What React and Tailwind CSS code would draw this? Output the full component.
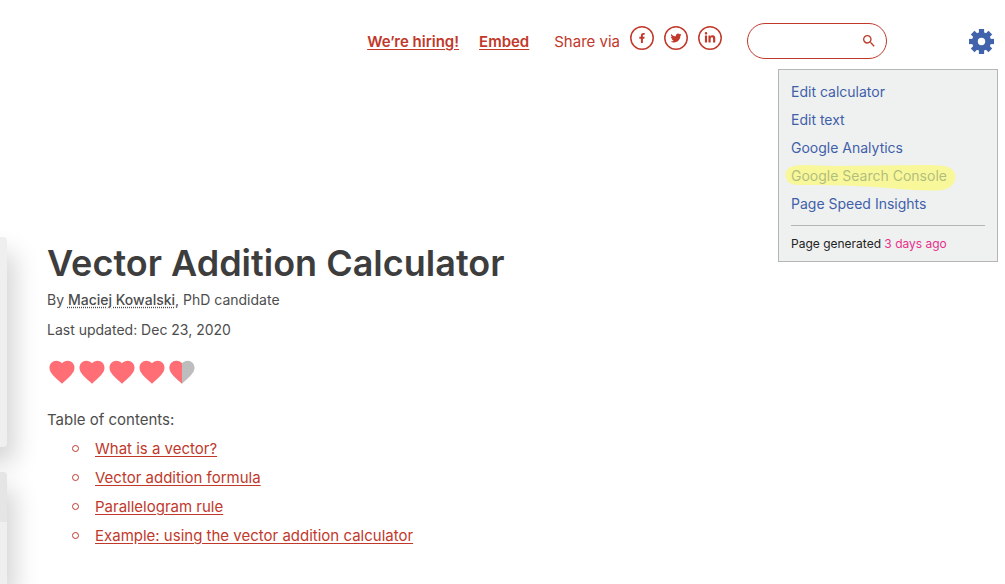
import React from "react";
import { FaFacebookF, FaTwitter, FaLinkedinIn } from "react-icons/fa";
import { MdSearch } from "react-icons/md";

const HEART =
  "M12 21.35l-1.45-1.32C5.4 15.36 2 12.28 2 8.5 2 5.42 4.42 3 7.5 3c1.74 0 3.41.81 4.5 2.09C13.09 3.81 14.76 3 16.5 3 19.58 3 22 5.42 22 8.5c0 3.78-3.4 6.86-8.55 11.54L12 21.35z";

const shareLinks = [
  { label: "Facebook", Icon: FaFacebookF, size: 10 },
  { label: "Twitter", Icon: FaTwitter, size: 11 },
  { label: "LinkedIn", Icon: FaLinkedinIn, size: 12 },
];

const adminLinks = [
  { label: "Edit calculator" },
  { label: "Edit text" },
  { label: "Google Analytics" },
  { label: "Google Search Console", marked: true },
  { label: "Page Speed Insights" },
];

const sections = [
  "What is a vector?",
  "Vector addition formula",
  "Parallelogram rule",
  "Example: using the vector addition calculator",
];

function Gear() {
  return (
    <svg viewBox="0 0 25 25" className="block size-[25px]" aria-hidden="true">
      <g fill="#4063ab">
        {[0, 45, 90, 135].map((angle) => (
          <rect key={angle} x="9.9" y="0" width="5.2" height="25" transform={`rotate(${angle} 12.5 12.5)`} />
        ))}
        <circle cx="12.5" cy="12.5" r="9.6" />
      </g>
      <circle cx="12.5" cy="12.5" r="3.7" fill="#fff" />
    </svg>
  );
}

function Heart({ half }) {
  return (
    <svg viewBox="0 0 24 24" className="block size-[30px]" aria-hidden="true">
      <clipPath id="heart-left">
        <rect width="12" height="24" />
      </clipPath>
      {half && <path d={HEART} fill="#bdbdbd" />}
      <path d={HEART} fill="#ff6d75" clipPath={half ? "url(#heart-left)" : undefined} />
    </svg>
  );
}

function ShareIcon({ Icon, size }) {
  return (
    <svg viewBox="0 0 24 24" className="block size-6" aria-hidden="true">
      <circle cx="12" cy="12" r="11.2" fill="none" stroke="currentColor" strokeWidth="1.5" />
      <Icon x={12 - size / 2} y={12 - size / 2} size={size} />
    </svg>
  );
}

function AdminMenu() {
  return (
    <div className="relative">
      <button type="button" aria-label="Page settings" aria-expanded="true" className="block cursor-pointer">
        <Gear />
      </button>
      <div className="absolute top-full -right-1 mt-[15px] w-[220px] border border-[#b5b7b7] bg-[#eff1f1] px-3 pt-2 pb-[7px]">
        <ul>
          {adminLinks.map(({ label, marked }) => (
            <li key={label} className="relative text-sm leading-7 text-[#3f60a9]">
              <a href="#">{label}</a>
              {marked && (
                <svg viewBox="0 0 171 27" className="pointer-events-none absolute top-[3px] -left-[6px] h-[27px] w-[171px]" aria-hidden="true">
                  <path
                    d="M9 1C20 -1 32 1 48 1L140 0C150 0 159 0 165 3C171 6 172 14 168 19C164 25 155 26 145 25.5C125 25 102 23 82 21.5C58 20 35 20 14 20C6 20 1 17 0.5 11C0 6 3 2 9 1Z"
                    fill="#fdfc60"
                    fillOpacity="0.6"
                  />
                </svg>
              )}
            </li>
          ))}
        </ul>
        <hr className="mt-[7px] border-[#b5b5b8]" />
        <p className="mt-2 text-xs leading-5 text-[#222]">
          Page generated <span className="text-[#e8308a]">3 days ago</span>
        </p>
      </div>
    </div>
  );
}

export default function App() {
  return (
    <div className="flex h-screen flex-col overflow-hidden bg-white font-['Inter','Liberation_Sans',sans-serif] text-[#4d4d4d]">
      <header className="relative z-10 flex h-[82px] shrink-0 items-center justify-end pr-[11px] text-[15px] text-[#c0392b]">
        <nav className="flex items-center gap-5 pt-0.5">
          <a href="#" className="font-semibold underline underline-offset-2">We’re hiring!</a>
          <a href="#" className="font-semibold underline underline-offset-2">Embed</a>
        </nav>
        <div className="ml-[25px] flex items-center pt-0.5">
          <span>Share via</span>
          <div className="mb-2 ml-[10px] flex gap-[10px]">
            {shareLinks.map(({ label, Icon, size }) => (
              <a key={label} href="#" aria-label={label}>
                <ShareIcon Icon={Icon} size={size} />
              </a>
            ))}
          </div>
        </div>
        <form className="mr-[82px] ml-[25px] flex h-9 w-[140px] items-center rounded-full border border-[#c0392b] pr-[9px] pl-4">
          <input type="text" aria-label="Search" className="min-w-0 flex-1 bg-transparent outline-none" />
          <button type="button" aria-label="Search" className="cursor-pointer">
            <MdSearch className="size-4" />
          </button>
        </form>
        <AdminMenu />
      </header>

      <div className="flex grow pt-[155px]">
        <aside className="flex w-[7px] shrink-0 flex-col items-end gap-[25px]">
          <div className="h-[210px] w-80 shrink-0 rounded-[4px] bg-[#efefef] shadow-[8px_16px_24px_rgba(0,0,0,0.17)]" />
          <div className="w-80 grow rounded-t-[4px] bg-[#efefef] shadow-[8px_16px_24px_rgba(0,0,0,0.17)]">
            <div className="h-[50px] rounded-t-[4px] bg-[#e5e5e5]" />
          </div>
        </aside>
        <main className="min-w-0 grow px-10">
          <h1 className="text-[36px] leading-[52px] font-semibold text-[#3d3d3d]">Vector Addition Calculator</h1>
          <p className="mt-px text-sm leading-5">
            By{" "}
            <a href="#" className="font-medium underline decoration-dotted underline-offset-2">Maciej Kowalski</a>, PhD candidate
          </p>
          <p className="mt-[10px] text-sm leading-5">Last updated: Dec 23, 2020</p>
          <div className="mt-[17px] flex" role="img" aria-label="Rated 4.5 out of 5">
            <Heart />
            <Heart />
            <Heart />
            <Heart />
            <Heart half />
          </div>
          <p className="mt-[18px] text-[15px] leading-[29px]">Table of contents:</p>
          <ul className="text-[15px] leading-[29px] text-[#c0392b]">
            {sections.map((section) => (
              <li key={section} className="flex items-center pl-[25px]">
                <span className="mr-4 size-[7px] rounded-full border border-[#c0392b]" />
                <a href="#" className="underline underline-offset-2">{section}</a>
              </li>
            ))}
          </ul>
        </main>
      </div>
    </div>
  );
}
